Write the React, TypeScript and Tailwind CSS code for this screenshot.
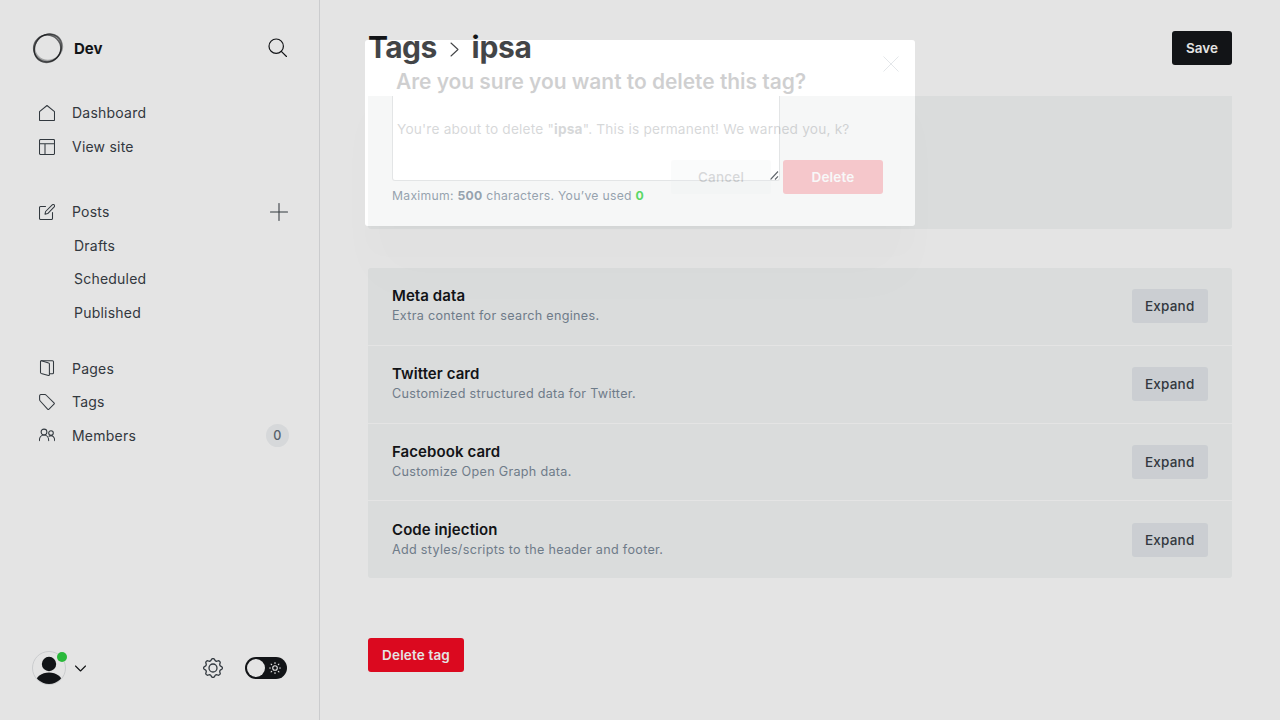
import type { ReactNode } from "react";

function Icon({ children, className, box = "0 0 16 16", sw = 1.05 }: { children: ReactNode; className: string; box?: string; sw?: number }) {
  return (
    <svg viewBox={box} className={className} fill="none" stroke="currentColor" strokeWidth={sw} strokeLinecap="round" strokeLinejoin="round">
      {children}
    </svg>
  );
}

const icons = {
  home: <path d="M.5 6.700 8 .5l7.500 6.200v8.300a.5.5 0 0 1-.5.5H1a.5.5 0 0 1-.5-.5z" />,
  site: <path d="M1.500.5h13a1 1 0 0 1 1 1v13a1 1 0 0 1-1 1h-13a1 1 0 0 1-1-1v-13a1 1 0 0 1 1-1zM.5 4.800h15M6 4.800v10.700" />,
  posts: (
    <>
      <path d="M13.500 8.500v6a1 1 0 0 1-1 1h-11a1 1 0 0 1-1-1v-11a1 1 0 0 1 1-1h5" />
      <path d="M8.700 9.600 6 10.200l.6-2.700L13.200.9a1.400 1.400 0 0 1 2 2z" />
    </>
  ),
  pages: (
    <>
      <path d="M1.500 1.500c0-.5.400-.8.900-.7l7.300 2.100c.4.100.7.5.7.900v11c0 .5-.4.800-.9.700l-7.300-2.100a1 1 0 0 1-.7-.9z" />
      <path d="M2.300.7h11.200a1 1 0 0 1 1 1v11a1 1 0 0 1-1 1h-3" />
    </>
  ),
  tags: <path d="M.6 5.500V2A1.500 1.500 0 0 1 2.100.5h3.600c.5 0 1 .2 1.300.5l8 7.800a1 1 0 0 1 0 1.400l-5 5a1 1 0 0 1-1.400 0L1.200 7c-.4-.4-.6-.9-.6-1.500z" />,
  members: (
    <>
      <circle cx="5" cy="5" r="2.900" />
      <path d="M.4 13.600c0-3.200 1.800-5.600 4.600-5.600s4.700 2.400 4.700 5.600" />
      <circle cx="12" cy="6" r="2.300" />
      <path d="M10 9.300c3.200-1.900 5.700.9 5.700 4.300" />
    </>
  ),
};

function Item({ icon, label, y, right }: { icon: ReactNode; label: string; y: string; right?: ReactNode }) {
  return (
    <div className={"flex items-center pl-[39px] pr-[31px] text-[#394047] " + y}>
      <Icon className="size-4 shrink-0">{icon}</Icon>
      <span className="ml-[17px] flex-1">{label}</span>
      {right}
    </div>
  );
}

function SubItem({ label }: { label: string }) {
  return <div className="flex h-[33.600px] items-center pl-[74px] text-[#394047]">{label}</div>;
}

const sections = [
  ["Meta data", "Extra content for search engines."],
  ["Twitter card", "Customized structured data for Twitter."],
  ["Facebook card", "Customize Open Graph data."],
  ["Code injection", "Add styles/scripts to the header and footer."],
];

function Sidebar() {
  return (
    <nav className="flex w-80 shrink-0 flex-col border-r border-[#e3e5e7] text-[14px] tracking-[0.220px]">
      <div className="flex h-[95.500px] items-center pl-8 pr-[33px]">
        <svg viewBox="0 0 32 32" className="size-8" fill="none" stroke="#15171a">
          <ellipse cx="15.200" cy="16.300" rx="13.600" ry="13.300" strokeWidth="1.400" opacity=".65" />
          <ellipse cx="16" cy="16" rx="15" ry="12.900" strokeWidth="1.200" opacity=".5" transform="rotate(-50 16 16)" />
          <ellipse cx="16" cy="16.500" rx="13" ry="14.600" strokeWidth="1.200" opacity=".5" transform="rotate(30 16 16)" />
          <ellipse cx="16.800" cy="15.500" rx="14" ry="13" strokeWidth="1.400" opacity=".3" transform="rotate(-20 16 16)" />
        </svg>
        <span className="ml-[10px] mt-[2.500px] flex-1 text-[15px] font-bold tracking-normal text-[#15171a]">Dev</span>
        <Icon className="mr-[-0.500px] size-[19px] text-[#15171a]" box="0 0 19 19" sw={1.2}>
          <circle cx="8.200" cy="8.200" r="7.200" />
          <path d="m13.300 13.300 5.200 5.200" />
        </Icon>
      </div>
      <Item y="h-[34px]" icon={icons.home} label="Dashboard" />
      <Item y="h-[34px]" icon={icons.site} label="View site" />
      <Item
        y="mt-[31px] h-[34px]"
        icon={icons.posts}
        label="Posts"
        right={<Icon className="size-[18px]" box="0 0 18 18"><path d="M9 .5v17M.5 9h17" /></Icon>}
      />
      <SubItem label="Drafts" />
      <SubItem label="Scheduled" />
      <SubItem label="Published" />
      <Item y="mt-[22px] h-[33.600px]" icon={icons.pages} label="Pages" />
      <Item y="h-[33.600px]" icon={icons.tags} label="Tags" />
      <Item
        y="h-[33.600px]"
        icon={icons.members}
        label="Members"
        right={<span className="-mr-px flex size-[23px] items-center justify-center rounded-full bg-[#f0f2f4] pt-[2px] text-[12.500px] font-medium text-[#626d79]">0</span>}
      />
      <div className="mt-auto flex h-[104px] items-center pl-8 pr-8">
        <div className="relative size-[34px]">
          <svg viewBox="0 0 34 34" className="size-[34px]">
            <clipPath id="face"><circle cx="17" cy="17" r="16" /></clipPath>
            <circle cx="17" cy="17" r="16.500" fill="none" stroke="#e3e5e7" />
            <g fill="#15171a" clipPath="url(#face)">
              <circle cx="17" cy="13" r="7.200" />
              <ellipse cx="17" cy="32" rx="13.500" ry="10.500" />
            </g>
          </svg>
          <span className="absolute right-[-1px] top-[1px] size-[10px] rounded-full bg-[#30cf43]" />
        </div>
        <Icon className="ml-[8.500px] h-[7px] w-[11px] text-[#15171a]" box="0 0 11 7" sw={1.1}>
          <path d="m.5 1 5 5 5-5" />
        </Icon>
        <Icon className="ml-auto size-5 text-[#394047]" box="0 0 20 20" sw={1.3}>
          <circle cx="10" cy="10" r="4" />
          <path d="M8.300 1.800c.5-1.600 2.900-1.600 3.400 0 .4 1.300 1.700 1.800 2.900 1.200 1.500-.8 3.200.9 2.400 2.400-.6 1.200-.1 2.500 1.200 2.900 1.600.5 1.600 2.900 0 3.400-1.300.4-1.800 1.700-1.200 2.900.8 1.500-.9 3.200-2.400 2.400-1.200-.6-2.500-.1-2.900 1.200-.5 1.600-2.900 1.600-3.400 0-.4-1.300-1.700-1.800-2.900-1.200-1.500.8-3.200-.9-2.400-2.400.6-1.200.1-2.500-1.200-2.900-1.600-.5-1.600-2.900 0-3.400C3.100 7.900 3.600 6.600 3 5.400 2.200 3.900 3.900 2.200 5.400 3c1.200.6 2.500.1 2.900-1.200z" />
        </Icon>
        <div className="ml-[22px] flex h-[22px] w-[42px] items-center justify-between rounded-full bg-[#15171a] pl-[2px] pr-[6px]">
          <span className="size-[18px] rounded-full bg-white" />
          <Icon className="size-3 text-white" box="0 0 12 12" sw={1.1}>
            <circle cx="6" cy="6" r="2.300" />
            <path d="M6 .6v.8M6 10.600v.8M.6 6h.8M10.600 6h.8M2.100 2.100l.6.6M9.300 9.300l.6.6M2.100 9.900l.6-.6M9.300 2.700l.6-.6" />
          </Icon>
        </div>
      </div>
    </nav>
  );
}

function Modal() {
  return (
    <div className="absolute left-[365px] top-10 h-[186px] w-[550px] rounded-[3px] bg-white/20 shadow-[0_0_0_2000px_rgba(0,0,0,0.105),0_3.8px_2.2px_rgba(0,0,0,0.005),0_9.2px_5.3px_rgba(0,0,0,0.004),0_17.3px_15px_rgba(0,0,0,0.005),0_30.8px_25px_rgba(0,0,0,0.006),0_60px_60px_rgba(0,0,0,0.012)]">
      <div className="flex h-full flex-col px-8 pt-[27px] opacity-20">
        <h2 className="ml-[-1px] text-[21px] font-semibold leading-[30px] tracking-[-0.050px] text-[#15171a]">Are you sure you want to delete this tag?</h2>
        <p className="mt-[21px] text-[13.700px] leading-[22px] tracking-[0.180px] text-[#394047]">
          You're about to delete "<b>ipsa</b>". This is permanent! We warned you, k?
        </p>
        <div className="mt-5 flex justify-end gap-3 text-[13.500px] font-medium tracking-[0.200px]">
          <button className="h-[34px] w-[100px] rounded-[3px] bg-[#ebeef0] text-[#394047]">Cancel</button>
          <button className="h-[34px] w-[100px] rounded-[3px] bg-[#f50b23] font-semibold text-white">Delete</button>
        </div>
        <svg viewBox="0 0 16 16" className="absolute right-4 top-4 size-4" fill="none" stroke="#7c8b9a">
          <path d="m.5.5 15 15m0-15-15 15" />
        </svg>
      </div>
    </div>
  );
}

export default function App() {
  return (
    <div className="relative flex h-[720px] w-[1280px] overflow-hidden bg-white font-['Inter',sans-serif]">
      <Sidebar />
      <main className="flex min-w-0 flex-1 flex-col px-12">
        <header className="flex h-24 items-center justify-between">
          <h1 className="mb-[3px] flex items-center text-[30px] font-bold leading-none tracking-[-0.600px] text-[#15171a]">
            Tags
            <Icon className="ml-[13px] mr-[13px] mt-[5px] h-[15px] w-[9px]" box="0 0 9 15" sw={1.1}>
              <path d="m1 1 7 6.500L1 14" />
            </Icon>
            <span className="tracking-[-0.350px]">ipsa</span>
          </h1>
          <button className="mb-px h-[34px] w-[60px] rounded-[3px] bg-[#15171a] pt-px text-[13.500px] font-semibold text-white">Save</button>
        </header>
        <section className="h-[133px] shrink-0 rounded-b-[3px] bg-[#f4f6f6] px-6">
          <div className="flex h-[84.500px] w-[388px] items-end justify-end rounded-b-[3px] border border-t-0 border-[#dddfe0] bg-white">
            <svg viewBox="0 0 9 9" className="size-[9px]" stroke="#394047" strokeWidth="1.100"><path d="m.5 8.500 7.500-8M5 8.500l3-3.200" /></svg>
          </div>
          <p className="mt-[5.500px] text-[12.200px] leading-5 tracking-[0.280px] text-[#7c8b9a]">
            Maximum: <b>500</b> characters. You’ve used <b className="text-[#30cf43]">0</b>
          </p>
        </section>
        <section className="mt-[39px] flex shrink-0 flex-col gap-px overflow-hidden rounded-[3px]">
          {sections.map(([title, text]) => (
            <div key={title} className="flex h-[76.800px] items-center justify-between bg-[#f4f6f6] px-6">
              <div>
                <h4 className="text-[15px] font-semibold leading-5 tracking-[0.080px] text-[#15171a]">{title}</h4>
                <p className="text-[12.600px] leading-[20.500px] tracking-[0.300px] text-[#7c8b9a]">{text}</p>
              </div>
              <button className="h-[34px] w-[76.500px] rounded-[3px] bg-[#e3e7eb] text-[13.500px] font-medium tracking-[0.200px] text-[#394047]">Expand</button>
            </div>
          ))}
        </section>
        <button className="mt-[60px] h-[34px] w-24 rounded-[3px] bg-[#f50b23] text-[13.500px] font-semibold tracking-[0.150px] text-white">Delete tag</button>
      </main>
      <Modal />
    </div>
  );
}
